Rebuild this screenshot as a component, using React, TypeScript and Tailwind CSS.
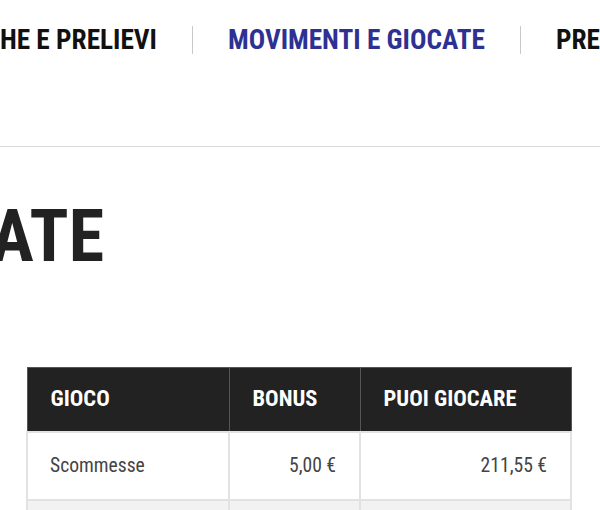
const font = { fontFamily: '"Roboto Condensed", Roboto, "Liberation Sans", sans-serif' };

const rows = [
  { game: "Scommesse", bonus: "5,00 €", play: "211,55 €" },
  { game: "Casinò", bonus: "0,00 €", play: "0,00 €" },
];

function Separator() {
  return <span className="mx-[35px] h-[28px] w-px shrink-0 bg-[#c8c8c8]" />;
}

export default function App() {
  return (
    <div className="h-[510px] w-[600px] overflow-hidden bg-white" style={font}>
      {/* tabs */}
      <nav className="flex h-[146px] items-start pt-[25px] text-[27.3px] font-bold uppercase leading-[30px] whitespace-nowrap">
        <div className="flex h-[30px] w-[157px] shrink-0 items-center justify-end text-[#111]">Ricariche e prelievi</div>
        <div className="flex h-[30px] items-center">
          <Separator />
        </div>
        <div className="flex h-[30px] items-center text-[#2e3192]">Movimenti e giocate</div>
        <div className="flex h-[30px] items-center">
          <Separator />
        </div>
        <div className="flex h-[30px] items-center text-[#111]">Preferenze</div>
      </nav>
      <div className="h-px w-full bg-[#dcdcdc]" />

      {/* title */}
      <div className="flex h-[150px] w-[104px] items-center justify-end whitespace-nowrap pt-[30px] text-[72px] font-bold uppercase leading-none text-[#222]">
        Movimenti e giocate
      </div>

      <div className="h-[70px]" />

      {/* table */}
      <div className="pl-[26px]">
        <table className="w-[546px] border-collapse text-left">
          <thead>
            <tr className="h-[64px] bg-[#222] text-[22.5px] font-bold uppercase text-white">
              <th className="w-[202px] border border-[#555] pl-[23px] pr-[24px] font-bold">Gioco</th>
              <th className="w-[131px] border border-[#555] pl-[23px] pr-[24px] font-bold">Bonus</th>
              <th className="border border-[#555] pl-[23px] pr-[24px] font-bold">Puoi giocare</th>
            </tr>
          </thead>
          <tbody className="text-[19.6px] text-[#444]">
            {rows.map((r, i) => (
              <tr key={r.game} className={`h-[68px] ${i % 2 ? "bg-[#f2f2f2]" : "bg-white"}`}>
                <td className="border-2 border-[#e2e2e2] pl-[22px] pr-[24px]">{r.game}</td>
                <td className="border-2 border-[#e2e2e2] px-[23px] text-right">{r.bonus}</td>
                <td className="border-2 border-[#e2e2e2] px-[23px] text-right">{r.play}</td>
              </tr>
            ))}
          </tbody>
        </table>
      </div>
    </div>
  );
}
